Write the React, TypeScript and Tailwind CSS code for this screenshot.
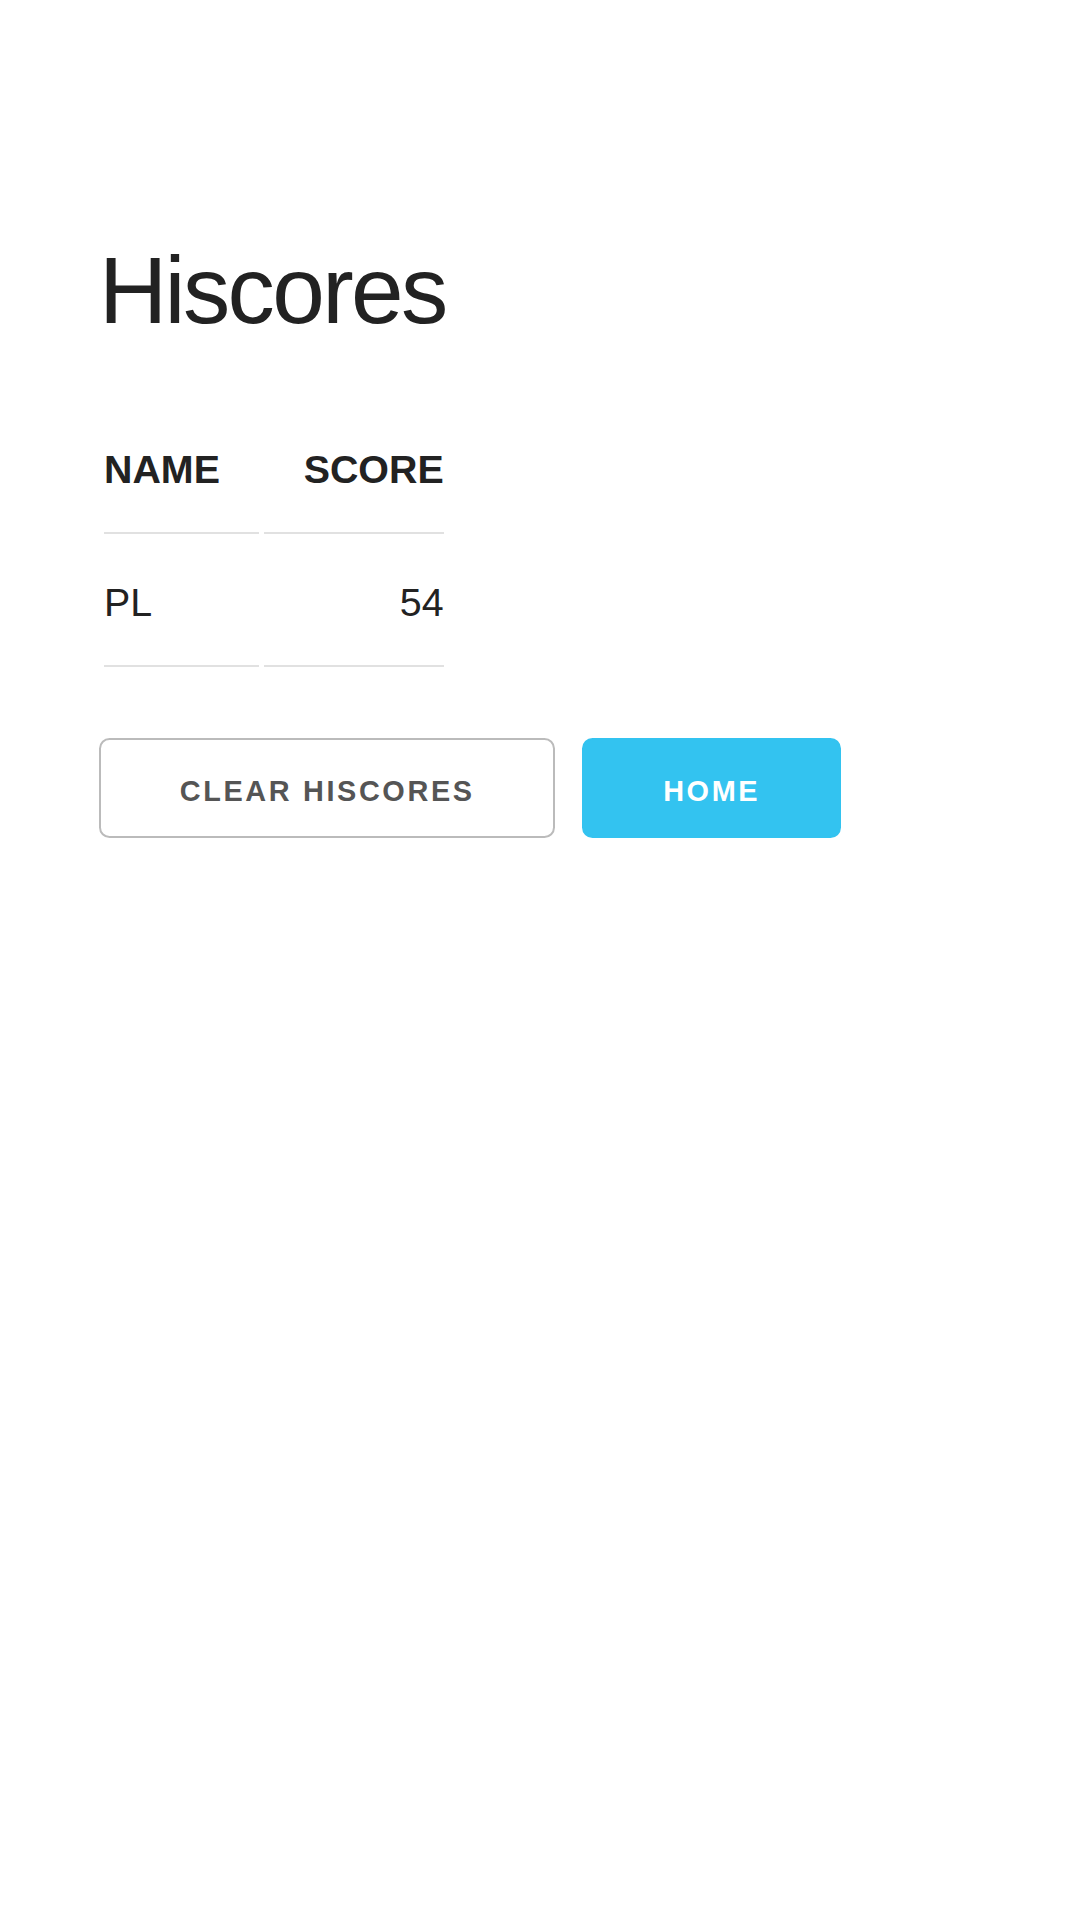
import React from "react";

export default function App() {
  const font = { fontFamily: '"Liberation Sans", Arial, Helvetica, sans-serif' };
  return (
    <div className="min-h-[1919px] w-full bg-white text-[#222]" style={font}>
      <div className="pl-[99px] pt-[230.5px]">
        <h2 className="m-0 mb-[52.5px] text-[94.5px] font-normal leading-[1.25] tracking-[-2.625px] text-[#222]">
          Hiscores
        </h2>
        <table className="mb-[66px] border-separate border-spacing-[5.25px] text-[39.375px] leading-[63px]">
          <thead>
            <tr>
              <th className="border-b-2 border-[#e1e1e1] py-[31.5px] pl-0 pr-[39.4px] text-left font-bold">
                NAME
              </th>
              <th className="border-b-2 border-[#e1e1e1] py-[31.5px] pl-[39.4px] pr-0 text-right font-bold">
                SCORE
              </th>
            </tr>
          </thead>
          <tbody>
            <tr>
              <td className="border-b-2 border-[#e1e1e1] py-[31.5px] pl-0 pr-[39.4px] text-left">
                PL
              </td>
              <td className="border-b-2 border-[#e1e1e1] py-[31.5px] pl-[39.4px] pr-0 text-right">
                54
              </td>
            </tr>
          </tbody>
        </table>
        <div className="flex items-start gap-[27px]">
          <button
            className="flex h-[99.75px] items-center justify-center rounded-[10.5px] border-2 border-[#bbb] bg-transparent px-[78.75px] pt-[7px] text-[28.875px] font-bold uppercase tracking-[2.625px] text-[#555]"
            style={font}
          >
            Clear Hiscores
          </button>
          <button
            className="flex h-[99.75px] items-center justify-center rounded-[10.5px] border-2 border-[#33C3F0] bg-[#33C3F0] px-[78.75px] pt-[7px] text-[28.875px] font-bold uppercase tracking-[2.625px] text-white"
            style={font}
          >
            Home
          </button>
        </div>
      </div>
    </div>
  );
}
